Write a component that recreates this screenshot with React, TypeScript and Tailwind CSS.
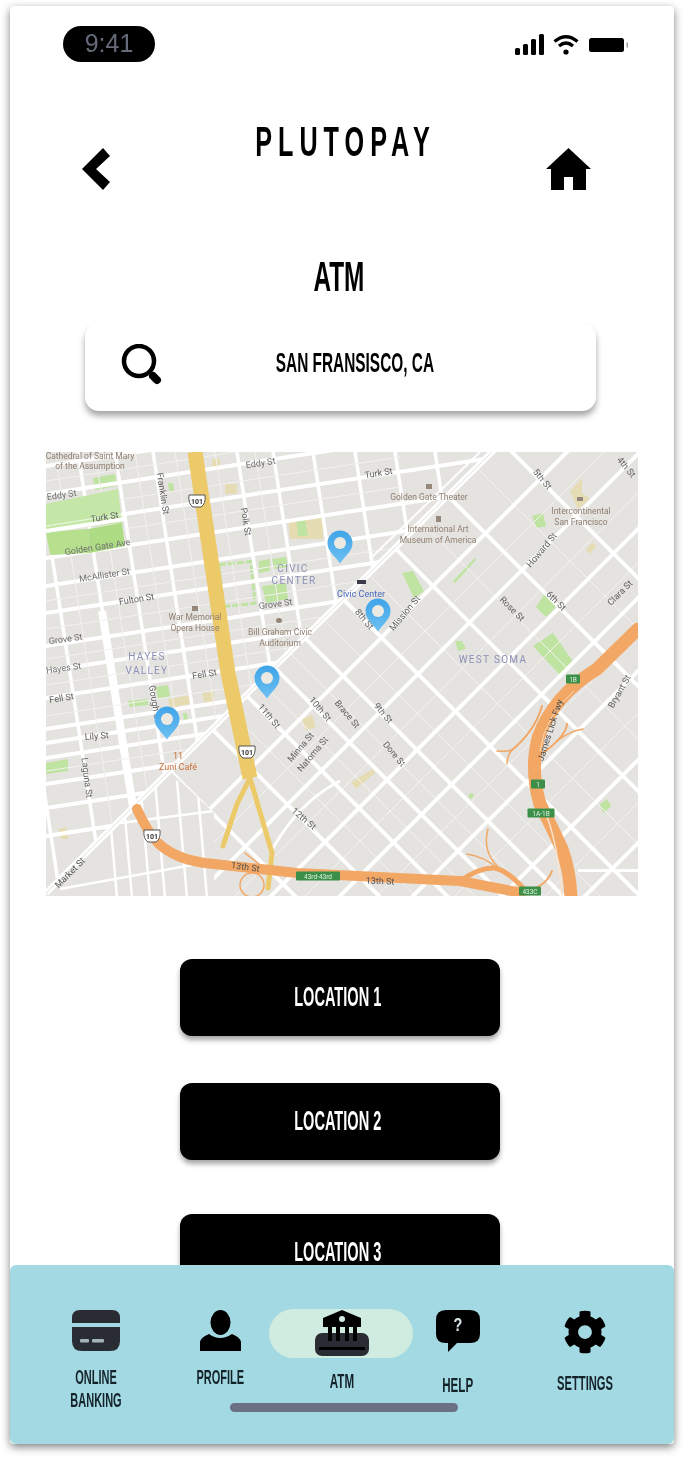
import { FaCog } from "react-icons/fa";

const cond = "whitespace-nowrap font-bold font-['Liberation_Sans_Narrow','Liberation_Sans',sans-serif]";

const westHoriz = [465, 493, 525, 557, 585, 612, 645, 670, 697, 728, 742, 757, 783, 807, 835];
const westVert = [-8, 36, 78, 115, 153, 237, 273, 313, 355, 395, 435];
const diagDown = [-61, 47, 152, 255, 332, 392, 448, 516, 600];
const diagUp = [1018, 1091, 1166, 1235, 1308, 1397, 1480];
const thinDown = [-10, 100, 205, 295, 362, 420, 480];
const thinUp = [1055, 1130, 1200, 1272, 1350, 1440];

const greens = [
  "93,477 115,473 117,485 95,489",
  "168,482 173,482 174,490 169,490",
  "259,560 270,558 270,570 259,572",
  "272,558 286,556 288,566 274,568",
  "262,585 286,582 288,598 266,602",
  "296,518 305,518 308,535 298,535",
  "402,572 413,570 424,590 414,597",
  "453,580 475,557 476,559 455,582",
  "532,515 543,512 546,525 537,527",
  "536,606 545,592 556,606 546,616",
  "533,645 553,632 574,662 560,674",
  "455,640 462,640 466,648 458,650",
  "599,804 607,798 611,805 604,812",
  "470,792 474,793 472,798 468,796",
  "46,762 68,758 68,770 46,773",
  "156,686 168,684 170,696 158,698",
  "128,700 148,698 148,704 130,706",
  "183,712 187,712 188,720 184,720",
];

const park = [
  { p: "46,503 118,488 122,522 46,530", c: "#c4e6a6" },
  { p: "88,528 122,522 125,545 90,552", c: "#aedc85" },
  { p: "46,531 88,528 90,552 50,554", c: "#b6e08e" },
];

const tans = [
  "212,458 220,458 220,468 212,468",
  "225,483 237,483 237,493 225,493",
  "288,518 323,514 323,538 290,538",
  "570,490 582,477 582,492 590,498 578,508",
  "586,549 592,541 596,545 590,553",
  "168,698 190,694 190,703 170,707",
  "202,692 214,690 214,700 204,702",
  "302,718 312,714 316,726 306,730",
  "351,781 373,768 375,772 356,788",
  "59,828 66,826 68,838 61,838",
];

const POI = "#8f7f72";

const labels = [
  { t: "Cathedral of Saint Mary", x: 90, y: 458, r: 0, c: POI },
  { t: "of the Assumption", x: 90, y: 468, r: 0, c: POI },
  { t: "Eddy St", x: 62, y: 497, r: -8, c: "#6f6f6f" },
  { t: "Turk St", x: 105, y: 519, r: -9, c: "#5f5f5f" },
  { t: "Golden Gate Ave", x: 98, y: 549, r: -9, c: "#6f6f6f" },
  { t: "McAllister St", x: 105, y: 577, r: -9, c: "#6f6f6f" },
  { t: "Fulton St", x: 137, y: 601, r: -9, c: "#5f5f5f" },
  { t: "Grove St", x: 66, y: 641, r: -8, c: "#6f6f6f" },
  { t: "Hayes St", x: 64, y: 670, r: -8, c: "#6f6f6f" },
  { t: "Franklin St", x: 160, y: 493, r: 81, c: "#5f5f5f" },
  { t: "Polk St", x: 243, y: 521, r: 81, c: "#5f5f5f" },
  { t: "Eddy St", x: 261, y: 465, r: -9, c: "#6f6f6f" },
  { t: "Grove St", x: 276, y: 606, r: -8, c: "#6f6f6f" },
  { t: "War Memorial", x: 195, y: 619, r: 0, c: POI },
  { t: "Opera House", x: 195, y: 630, r: 0, c: POI },
  { t: "Bill Graham Civic", x: 280, y: 634, r: 0, c: POI },
  { t: "Auditorium", x: 280, y: 645, r: 0, c: POI },
  { t: "Turk St", x: 379, y: 475, r: -9, c: "#5f5f5f" },
  { t: "Golden Gate Theater", x: 429, y: 499, r: 0, c: POI },
  { t: "International Art", x: 438, y: 531, r: 0, c: POI },
  { t: "Museum of America", x: 438, y: 542, r: 0, c: POI },
  { t: "5th St", x: 540, y: 480, r: 50, c: "#5f5f5f" },
  { t: "4th St", x: 624, y: 468, r: 50, c: "#5f5f5f" },
  { t: "Intercontinental", x: 581, y: 513, r: 0, c: POI },
  { t: "San Francisco", x: 581, y: 524, r: 0, c: POI },
  { t: "Howard St", x: 544, y: 551, r: -50, c: "#5f5f5f" },
  { t: "6th St", x: 554, y: 602, r: 45, c: "#5f5f5f" },
  { t: "Clara St", x: 622, y: 594, r: -45, c: "#5f5f5f" },
  { t: "Rose St", x: 510, y: 610, r: 45, c: "#5f5f5f" },
  { t: "Mission St", x: 407, y: 614, r: -50, c: "#5f5f5f" },
  { t: "8th St", x: 362, y: 620, r: 50, c: "#5f5f5f" },
  { t: "Civic Center", x: 361, y: 596, r: 0, c: "#4a6cc0" },
  { t: "Fell St", x: 205, y: 676, r: -9, c: "#5f5f5f" },
  { t: "Fell St", x: 62, y: 700, r: -9, c: "#5f5f5f" },
  { t: "Gough St", x: 152, y: 703, r: 81, c: "#5f5f5f" },
  { t: "Lily St", x: 97, y: 738, r: -5, c: "#5f5f5f" },
  { t: "Laguna St", x: 84, y: 777, r: 83, c: "#5f5f5f" },
  { t: "Zuni Café", x: 178, y: 769, r: 0, c: "#c8703a" },
  { t: "11th St", x: 267, y: 717, r: 50, c: "#5f5f5f" },
  { t: "10th St", x: 318, y: 710, r: 50, c: "#5f5f5f" },
  { t: "Minna St", x: 303, y: 748, r: -50, c: "#5f5f5f" },
  { t: "Natoma St", x: 315, y: 755, r: -50, c: "#5f5f5f" },
  { t: "Brace St", x: 345, y: 715, r: 50, c: "#5f5f5f" },
  { t: "12th St", x: 302, y: 820, r: 40, c: "#5f5f5f" },
  { t: "13th St", x: 245, y: 869, r: 8, c: "#4f4f4f" },
  { t: "Market St", x: 72, y: 874, r: -45, c: "#4f4f4f" },
  { t: "9th St", x: 381, y: 714, r: 50, c: "#5f5f5f" },
  { t: "Dore St", x: 392, y: 755, r: 50, c: "#5f5f5f" },
  { t: "James Lick Fwy", x: 553, y: 730, r: -72, c: "#4f4f4f" },
  { t: "13th St", x: 380, y: 883, r: 2, c: "#4f4f4f" },
  { t: "Bryant St", x: 622, y: 692, r: -60, c: "#5f5f5f" },
];

const areas = [
  { t: "CIVIC", x: 293, y: 571 },
  { t: "CENTER", x: 294, y: 583 },
  { t: "HAYES", x: 147, y: 659 },
  { t: "VALLEY", x: 147, y: 673 },
  { t: "WEST SOMA", x: 493, y: 662 },
];

const pins = [
  [340, 545],
  [378, 613],
  [267, 680],
  [167, 721],
];

const shields = [
  [197, 500],
  [247, 751],
  [152, 835],
];

const exits = [
  { t: "43rd-43rd", x: 318, y: 875, w: 44 },
  { t: "1B", x: 573, y: 678, w: 14 },
  { t: "1", x: 538, y: 783, w: 14 },
  { t: "1A-1B", x: 541, y: 812, w: 27 },
  { t: "433C", x: 530, y: 890, w: 22 },
];

function CityMap() {
  return (
    <svg viewBox="46 451 592 444" className="block w-[592px] h-[444px] blur-[0.5px]">
      <defs>
        <clipPath id="west">
          <polygon points="46,451 494,451 46,893" />
        </clipPath>
        <clipPath id="east">
          <polygon points="494,451 640,451 640,897 214,897 214,812 170,770" />
        </clipPath>
        <clipPath id="south">
          <polygon points="46,897 214,897 214,812 170,770 46,893" />
        </clipPath>
        <linearGradient id="pin" x1="0" y1="0" x2="0" y2="1">
          <stop offset="0" stopColor="#3fa4e8" />
          <stop offset="1" stopColor="#6cc0f2" />
        </linearGradient>
      </defs>
      <rect x="46" y="451" width="592" height="444" fill="#e5e3df" />
      {tans.map((p) => (
        <polygon key={p} points={p} fill="#e6dcb4" />
      ))}
      {greens.map((p) => (
        <polygon key={p} points={p} fill="#bfe3a0" />
      ))}
      <rect x="221" y="562" width="32" height="42" fill="none" stroke="#bfe3a0" strokeWidth="3" strokeDasharray="7 2" transform="rotate(-6 237 583)" />
      <g clipPath="url(#west)" stroke="#ffffff" fill="none">
        {westHoriz.map((y) => (
          <line key={y} x1="46" y1={y} x2="520" y2={y - 474 * 0.153} strokeWidth="4" />
        ))}
        {westVert.map((x) => (
          <line key={x} x1={x} y1="451" x2={x + 69} y2="900" strokeWidth="3.5" />
        ))}
        <line x1="102" y1="610" x2="133" y2="806" strokeWidth="8" />
        {[480, 510, 540, 600, 628, 658, 684, 715, 770].map((y) => (
          <line key={y} x1="46" y1={y} x2="400" y2={y - 54} strokeWidth="1" stroke="#f2f1ee" />
        ))}
        {[55, 95, 135, 175, 215, 255].map((x) => (
          <line key={x} x1={x} y1="451" x2={x + 69} y2="900" strokeWidth="1" stroke="#f2f1ee" />
        ))}
      </g>
      {park.map((a) => (
        <polygon key={a.p} points={a.p} fill={a.c} />
      ))}
      <line x1="46" y1="525" x2="122" y2="513" stroke="#fff" strokeWidth="1" opacity="0.7" />
      <line x1="46" y1="530" x2="124" y2="518" stroke="#fff" strokeWidth="4" />
      <g clipPath="url(#east)" stroke="#ffffff" fill="none">
        {thinDown.map((c) => (
          <line key={c} x1="100" y1={100 + c} x2="700" y2={700 + c} strokeWidth="1" stroke="#f4f3f0" />
        ))}
        {thinUp.map((c) => (
          <line key={c} x1="100" y1={c - 100} x2="700" y2={c - 700} strokeWidth="1" stroke="#f4f3f0" />
        ))}
        {diagDown.map((c) => (
          <line key={c} x1="100" y1={100 + c} x2="700" y2={700 + c} strokeWidth="4" />
        ))}
        {diagUp.map((c) => (
          <line key={c} x1="100" y1={c - 100} x2="700" y2={c - 700} strokeWidth="4" />
        ))}
        <rect x="578" y="868" width="70" height="3" fill="#fff" stroke="none" />
      </g>
      <g clipPath="url(#south)" stroke="#ffffff" fill="none" strokeWidth="2.5">
        {[107, 122, 140, 155, 177, 197].map((x) => (
          <line key={x} x1={x} y1="780" x2={x + 10} y2="897" />
        ))}
        <line x1="60" y1="888" x2="214" y2="860" />
        <line x1="120" y1="822" x2="214" y2="810" />
      </g>
      <line x1="46" y1="892" x2="494" y2="449" stroke="#ffffff" strokeWidth="6" />
      <line x1="46" y1="892" x2="494" y2="449" stroke="#d9d8d4" strokeWidth="0.8" />
      <path d="M273 847 Q 300 800 340 780" stroke="#fff" strokeWidth="3" fill="none" />
      <path d="M480 451 L370 558" stroke="#fff" strokeWidth="2" fill="none" />

      {/* 101 */}
      <g fill="none" stroke="#ecca69" strokeLinejoin="round">
        <path d="M195 451 L228 672 L250 777" strokeWidth="15" />
        <path d="M250 777 L237 803 L223 845" strokeWidth="5" strokeLinecap="round" />
        <path d="M250 777 L272 852 L268 887" strokeWidth="5" strokeLinecap="round" />
      </g>

      {/* orange freeways */}
      <g fill="none" stroke="#f2a765" strokeLinejoin="round" strokeLinecap="round">
        <path d="M137 808 Q 148 832 158 842 Q 175 858 205 862 L 297 872 L 460 880 L 522 892" strokeWidth="10" />
        <path d="M460 880 Q 480 866 495 867 Q 508 870 524 888" strokeWidth="5" />
        <path d="M467 853 Q 485 856 497 867" strokeWidth="1.5" />
        <path d="M488 828 Q 482 850 498 866" strokeWidth="1.5" />
        <path d="M638 628 L597 668 Q 553 695 538 737 Q 530 770 540 803" strokeWidth="13" />
        <path d="M540 803 Q 552 826 562 848 Q 570 870 571 897" strokeWidth="13" />
        <path d="M544 808 Q 558 840 562 897" strokeWidth="1.5" stroke="#fbe3cc" />
        <path d="M542 705 Q 535 730 512 749" strokeWidth="2" />
        <path d="M497 750 Q 505 751 512 749 Q 507 755 507 763" strokeWidth="1.5" />
        <path d="M567 723 Q 566 735 543 752" strokeWidth="2" />
        <path d="M583 728 Q 570 730 557 740" strokeWidth="1.5" />
        <circle cx="252" cy="884" r="12" strokeWidth="1.5" />
        <path d="M245 852 L260 864" strokeWidth="1.5" />
        <path d="M525 888 Q 545 888 552 870" strokeWidth="2" />
      </g>
      <path d="M574 690 Q 545 715 540 750" stroke="#fbe3cc" strokeWidth="0.8" fill="none" />

      {shields.map(([x, y]) => (
        <g key={`${x}-${y}`}>
          <path
            d={`M${x - 8} ${y - 6} H${x + 8} Q${x + 9} ${y + 3} ${x + 4} ${y + 6} H${x - 4} Q${x - 9} ${y + 3} ${x - 8} ${y - 6}Z`}
            fill="#fff"
            stroke="#555"
            strokeWidth="1"
          />
          <text x={x} y={y + 3} textAnchor="middle" fontSize="7" fontWeight="700" fontFamily="Roboto, sans-serif" fill="#333">
            101
          </text>
        </g>
      ))}
      {exits.map((e) => (
        <g key={e.t}>
          <rect x={e.x - e.w / 2} y={e.y - 4.5} width={e.w} height="9" rx="1" fill="#3b8f48" />
          <text x={e.x} y={e.y + 2.5} textAnchor="middle" fontSize="6.5" fontFamily="Roboto, sans-serif" fill="#e6f3e6">
            {e.t}
          </text>
        </g>
      ))}

      {labels.map((l) => (
        <text
          key={`${l.t}-${l.x}`}
          x={l.x}
          y={l.y}
          textAnchor="middle"
          fontSize={l.c === POI ? 8.5 : 9}
          fontFamily="Roboto, sans-serif"
          fill={l.c}
          transform={l.r ? `rotate(${l.r} ${l.x} ${l.y})` : undefined}
        >
          {l.t}
        </text>
      ))}
      {areas.map((a) => (
        <text key={a.t} x={a.x} y={a.y} textAnchor="middle" fontSize="10" letterSpacing="1.3" fontFamily="Roboto, sans-serif" fill="#8b90b8">
          {a.t}
        </text>
      ))}

      {/* landmarks */}
      <rect x="192" y="605" width="6" height="5" fill="#96877b" />
      <rect x="276" y="617" width="6" height="5" rx="2.5" fill="#96877b" />
      <rect x="426" y="483" width="6" height="5" fill="#96877b" />
      <rect x="436" y="515" width="5" height="6" fill="#96877b" />
      <rect x="577" y="496" width="6" height="4" fill="#96877b" />
      <text x="178" y="758" textAnchor="middle" fontSize="9" fontFamily="Roboto, sans-serif" fill="#c8703a">
        11
      </text>
      <rect x="357" y="579" width="9" height="4" fill="#3a3a4a" />

      {pins.map(([x, y]) => (
        <g key={`${x}`}>
          <path
            d={`M${x} ${y + 17.5} C${x - 6} ${y + 9} ${x - 12.5} ${y + 5} ${x - 12.5} ${y - 3} A12.5 12.5 0 1 1 ${x + 12.5} ${y - 3} C${x + 12.5} ${y + 5} ${x + 6} ${y + 9} ${x} ${y + 17.5}Z`}
            fill="url(#pin)"
          />
          <circle cx={x} cy={y - 3} r="6" fill="#ece9e2" />
        </g>
      ))}
    </svg>
  );
}

function StatusIcons() {
  return (
    <div className="flex items-center gap-[8px] mt-[2px]">
      <svg width="30" height="24" viewBox="0 0 30 24" fill="#000">
        <rect x="0" y="15" width="5" height="7" rx="1.5" />
        <rect x="8" y="11" width="5" height="11" rx="1.5" />
        <rect x="16" y="6" width="5" height="16" rx="1.5" />
        <rect x="24" y="1" width="5" height="21" rx="1.5" />
      </svg>
      <svg width="26" height="24" viewBox="0 0 26 24" fill="none" stroke="#000" strokeWidth="3.2">
        <path d="M1.5 8.5 Q13 -1 24.5 8.5" />
        <path d="M6 13 Q13 7 20 13" />
        <circle cx="13" cy="19" r="2.6" fill="#000" stroke="none" />
      </svg>
      <svg width="40" height="20" viewBox="0 0 40 20" className="ml-[2px]">
        <rect x="0" y="3" width="35" height="14" rx="2.5" fill="#000" />
        <rect x="37.5" y="7.5" width="1.5" height="5" fill="#9a9a9a" />
      </svg>
    </div>
  );
}

function BackIcon() {
  return (
    <svg width="29" height="42" viewBox="0 0 29 42" fill="#000">
      <path d="M21 0 L28 8 L14 21 L28 34 L21 42 L0 21Z" />
    </svg>
  );
}

function HomeIcon() {
  return (
    <svg width="45" height="42" viewBox="0 0 45 42" fill="#000">
      <path d="M22.5 0 L45 21 L40 21 L40 42 L27 42 L27 29 L18 29 L18 42 L5 42 L5 21 L0 21Z" />
    </svg>
  );
}

function SearchIcon() {
  return (
    <svg width="42" height="42" viewBox="0 0 42 42" fill="none" stroke="#000">
      <circle cx="18" cy="17" r="15" strokeWidth="4.5" />
      <path d="M32 32 L36 36" strokeWidth="8" strokeLinecap="round" />
    </svg>
  );
}

function CardIcon() {
  return (
    <svg width="48" height="41" viewBox="0 0 48 41" fill="#2a2c33">
      <path d="M0 13 V8 Q0 0 8 0 H40 Q48 0 48 8 V13Z" />
      <path d="M0 17 H48 V31 Q48 41 38 41 H10 Q0 41 0 31Z" />
      <rect x="8" y="29" width="9" height="3.5" rx="1" fill="#a3b3ba" />
      <rect x="20" y="29" width="12" height="3.5" rx="1" fill="#a3b3ba" />
    </svg>
  );
}

function PersonIcon() {
  return (
    <svg width="41" height="41" viewBox="0 0 41 41" fill="#000">
      <ellipse cx="20.5" cy="12.5" rx="10" ry="12.5" />
      <path d="M0 41 V32 Q1 27 9 24 Q20 32 32 24 Q40 27 41 32 V41Z" />
    </svg>
  );
}

function BankIcon() {
  return (
    <svg width="54" height="46" viewBox="0 0 54 46" fill="#000">
      <path d="M27 0 L46 8 V17 H8 V8Z" />
      <circle cx="27" cy="9" r="3" fill="#d0ebe0" />
      <rect x="0" y="23" width="54" height="23" rx="7" fill="#2a2c33" />
      <rect x="13" y="17" width="4" height="14" />
      <rect x="21" y="17" width="4" height="14" />
      <rect x="30" y="17" width="4" height="14" />
      <rect x="38" y="17" width="4" height="14" />
      <rect x="4" y="37" width="46" height="3" fill="#000" />
    </svg>
  );
}

function HelpIcon() {
  return (
    <div className="relative w-[44px] h-[44px]">
      <svg width="44" height="44" viewBox="0 0 44 44" fill="#000">
        <path d="M10 0 H34 Q44 0 44 10 V24 Q44 33 34 33 H21 L12 42 L12 33 H10 Q0 33 0 24 V10 Q0 0 10 0Z" />
      </svg>
      <span className="absolute left-0 top-[5px] w-[44px] text-center text-[#d8e6ea] text-[18px] leading-[20px] font-bold scale-x-[0.8] font-['Liberation_Sans',sans-serif]">
        ?
      </span>
    </div>
  );
}

export default function App() {
  return (
    <div className="w-[684px] h-[1458px] bg-white pl-[10px] pt-[6px] blur-[0.4px]">
      <div className="w-[664px] h-[1438px] flex flex-col bg-white rounded-[4px] overflow-hidden shadow-[0_3px_9px_rgba(0,0,0,0.5)]">
        <div className="flex-1 min-h-0 overflow-hidden">
          <div className="flex items-center justify-between mt-[20px] pl-[53px] pr-[45px]">
            <div className="w-[92px] h-[36px] rounded-full bg-black flex items-center justify-center text-[#656b78] text-[25px] font-['Liberation_Sans',sans-serif]">
              9:41
            </div>
            <StatusIcons />
          </div>

          <div className="grid grid-cols-[1fr_auto_1fr] items-start mt-[65px] px-[83px]">
            <div className="mt-[21px] ml-[-11px]">
              <BackIcon />
            </div>
            <div className={`${cond} inline-block text-[42px] leading-[30px] tracking-[10px] pl-[10px] scale-x-[0.6] text-black`}>PLUTOPAY</div>
            <div className="mt-[21px] justify-self-end">
              <HomeIcon />
            </div>
          </div>

          <div className="mt-[72px] text-center leading-[30px] h-[30px] pr-[6px]">
            <span className={`${cond} inline-block text-[42px] scale-x-[0.58] text-black`}>ATM</span>
          </div>

          <div className="mt-[31px] ml-[75px] w-[511px] h-[88px] rounded-[14px] bg-white shadow-[0_5px_6px_rgba(0,0,0,0.35)] flex items-center pl-[36px]">
            <div className="mt-[-4px]">
              <SearchIcon />
            </div>
            <div className="flex-1 text-center pl-[10px] mt-[-8px]">
              <span className={`${cond} inline-block text-[28px] leading-[30px] scale-x-[0.55] text-black`}>SAN FRANSISCO, CA</span>
            </div>
            <div className="w-[60px]" />
          </div>

          <div className="mt-[41px] ml-[36px] w-[592px] h-[444px] overflow-hidden">
            <CityMap />
          </div>

          <div className="flex flex-col items-center mt-[63px] pr-[4px]">
            {["LOCATION 1", "LOCATION 2", "LOCATION 3"].map((name, i) => (
              <div
                key={name}
                className={`w-[320px] h-[77px] shrink-0 rounded-[12px] bg-black text-center leading-[77px] pr-[4px] shadow-[0_4px_5px_rgba(0,0,0,0.35)] ${i === 1 ? "mt-[47px]" : i === 2 ? "mt-[54px]" : ""}`}
              >
                <span className={`${cond} inline-block text-[27px] scale-x-[0.54] text-white`}>{name}</span>
              </div>
            ))}
          </div>
        </div>

        <div className="relative h-[179px] shrink-0 bg-[#a3d9e2] rounded-[6px] flex items-start pt-[45px] pl-[24px]">
          <div className="w-[124px] flex flex-col items-center">
            <CardIcon />
            <div className={`${cond} mt-[15px] w-full text-center text-[20px] leading-[23px] text-[#14222a]`}>
              <span className="block scale-x-[0.55]">ONLINE</span>
              <span className="block scale-x-[0.55]">BANKING</span>
            </div>
          </div>
          <div className="w-[124px] flex flex-col items-center">
            <PersonIcon />
            <span className={`${cond} mt-[15px] text-[20px] leading-[23px] text-[#14222a] scale-x-[0.55]`}>PROFILE</span>
          </div>
          <div className="relative w-[120px] flex flex-col items-center">
            <div className="absolute left-[-13px] top-[-1px] w-[144px] h-[49px] rounded-full bg-[#d0ebe0]" />
            <div className="relative">
              <BankIcon />
            </div>
            <span className={`${cond} relative mt-[14px] text-[20px] leading-[23px] text-[#14222a] scale-x-[0.58]`}>ATM</span>
          </div>
          <div className="w-[112px] flex flex-col items-center">
            <HelpIcon />
            <span className={`${cond} mt-[20px] text-[20px] leading-[23px] text-[#14222a] scale-x-[0.58]`}>HELP</span>
          </div>
          <div className="w-[142px] flex flex-col items-center">
            <FaCog size={44} color="#000" />
            <span className={`${cond} mt-[18px] text-[20px] leading-[23px] text-[#14222a] scale-x-[0.56]`}>SETTINGS</span>
          </div>
          <div className="absolute left-[220px] top-[138px] w-[228px] h-[9px] rounded-full bg-[#6b7082]" />
        </div>
      </div>
    </div>
  );
}
